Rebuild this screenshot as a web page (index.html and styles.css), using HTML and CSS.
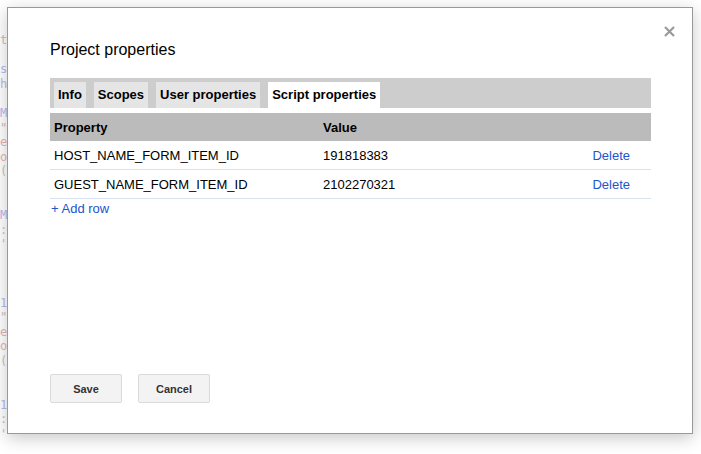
FILE: index.html
```html
<!DOCTYPE html>
<html>
<head>
<meta charset="utf-8">
<link rel="stylesheet" href="styles.css">
</head>
<body>
<div class="code">
  <div class="ln g">t</div>
  <div class="ln">&nbsp;</div>
  <div class="ln b">s</div>
  <div class="ln b">h</div>
  <div class="ln">&nbsp;</div>
  <div class="ln b">M</div>
  <div class="ln g">"</div>
  <div class="ln r">e</div>
  <div class="ln r">o</div>
  <div class="ln g">(</div>
  <div class="ln">&nbsp;</div>
  <div class="ln">&nbsp;</div>
  <div class="ln b">M</div>
  <div class="ln g">:</div>
  <div class="ln r">'</div>
  <div class="ln">&nbsp;</div>
  <div class="ln">&nbsp;</div>
  <div class="ln">&nbsp;</div>
  <div class="ln b">1</div>
  <div class="ln g">"</div>
  <div class="ln r">e</div>
  <div class="ln r">o</div>
  <div class="ln g">(</div>
  <div class="ln">&nbsp;</div>
  <div class="ln">&nbsp;</div>
  <div class="ln b">1</div>
  <div class="ln g">:</div>
  <div class="ln r">'</div>
</div>

<div class="dialog">
  <button class="close" aria-label="Close">
    <svg width="11" height="11" viewBox="0 0 11 11"><path d="M1 1L10 10M10 1L1 10" stroke="#9a9a9a" stroke-width="2.2" fill="none"/></svg>
  </button>
  <div class="body">
    <h1 class="title">Project properties</h1>
    <div class="tabs">
      <span class="tab">Info</span>
      <span class="tab">Scopes</span>
      <span class="tab">User properties</span>
      <span class="tab active">Script properties</span>
    </div>
    <div class="table">
      <div class="row head">
        <div class="cell">Property</div>
        <div class="cell">Value</div>
        <div class="cell"></div>
      </div>
      <div class="row">
        <div class="cell">HOST_NAME_FORM_ITEM_ID</div>
        <div class="cell">191818383</div>
        <div class="cell act"><a class="link">Delete</a></div>
      </div>
      <div class="row">
        <div class="cell">GUEST_NAME_FORM_ITEM_ID</div>
        <div class="cell">2102270321</div>
        <div class="cell act"><a class="link">Delete</a></div>
      </div>
    </div>
    <a class="link add">+ Add row</a>
  </div>
  <div class="buttons">
    <button class="btn">Save</button>
    <button class="btn">Cancel</button>
  </div>
</div>
</body>
</html>
```

FILE: styles.css
```css
html, body {
  margin: 0;
  padding: 0;
  background: #fff;
  overflow: hidden;
  width: 701px;
  height: 454px;
  font-family: "Liberation Sans", Arial, sans-serif;
}

.code {
  padding-top: 33px;
  font-family: "DejaVu Sans Mono", monospace;
  font-size: 12px;
  line-height: 14.6px;
}
.ln { white-space: pre; }
.g { color: #c4c4c4; }
.b { color: #b9b9ee; }
.r { color: #e9b2b2; }

.dialog {
  position: absolute;
  left: 7px;
  top: 7px;
  width: 686px;
  height: 427px;
  background: #fff;
  border: 1px solid #999;
  box-shadow: 0 4px 16px rgba(0, 0, 0, 0.22);
  display: flex;
  flex-direction: column;
  padding: 0 41px 30px 42px;
  box-sizing: border-box;
}

.close {
  position: absolute;
  top: 18px;
  left: 656px;
  width: 11px;
  height: 11px;
  padding: 0;
  border: 0;
  background: none;
  display: flex;
}

.body {
  flex: 1;
  display: flex;
  flex-direction: column;
  padding-top: 32px;
}

.title {
  margin: 0;
  font-size: 16px;
  font-weight: normal;
  line-height: 20px;
  color: #000;
}

.tabs {
  margin-top: 18px;
  background: #cdcdcd;
  height: 30px;
  box-sizing: border-box;
  padding: 4px 0 0 4px;
  display: flex;
  gap: 8px;
}
.tab {
  background: #e5e5e5;
  font-size: 13px;
  font-weight: bold;
  color: #000;
  padding: 0 4px;
  line-height: 26px;
}
.tab.active { background: #fff; }

.table {
  margin-top: 5px;
  display: flex;
  flex-direction: column;
}
.row {
  display: grid;
  grid-template-columns: 269px 1fr auto;
  height: 29px;
  border-bottom: 1px solid #d9e2f0;
  box-sizing: border-box;
  font-size: 13px;
  color: #000;
  align-items: center;
}
.row.head {
  background: #bbb;
  font-weight: bold;
  height: 28px;
  border-bottom: 0;
}
.cell { padding-left: 4px; }
.cell.act { padding-right: 21px; }

.link {
  color: #2255cc;
  font-size: 13px;
  cursor: pointer;
}
.add {
  margin-top: 2px;
  padding-left: 1px;
  line-height: 16px;
}

.buttons {
  display: flex;
  gap: 16px;
}
.btn {
  width: 72px;
  height: 29px;
  background: #f3f3f3;
  border: 1px solid #dadada;
  border-radius: 2px;
  font-family: "Liberation Sans", Arial, sans-serif;
  font-size: 11px;
  font-weight: bold;
  color: #333;
  padding: 0;
}
```
